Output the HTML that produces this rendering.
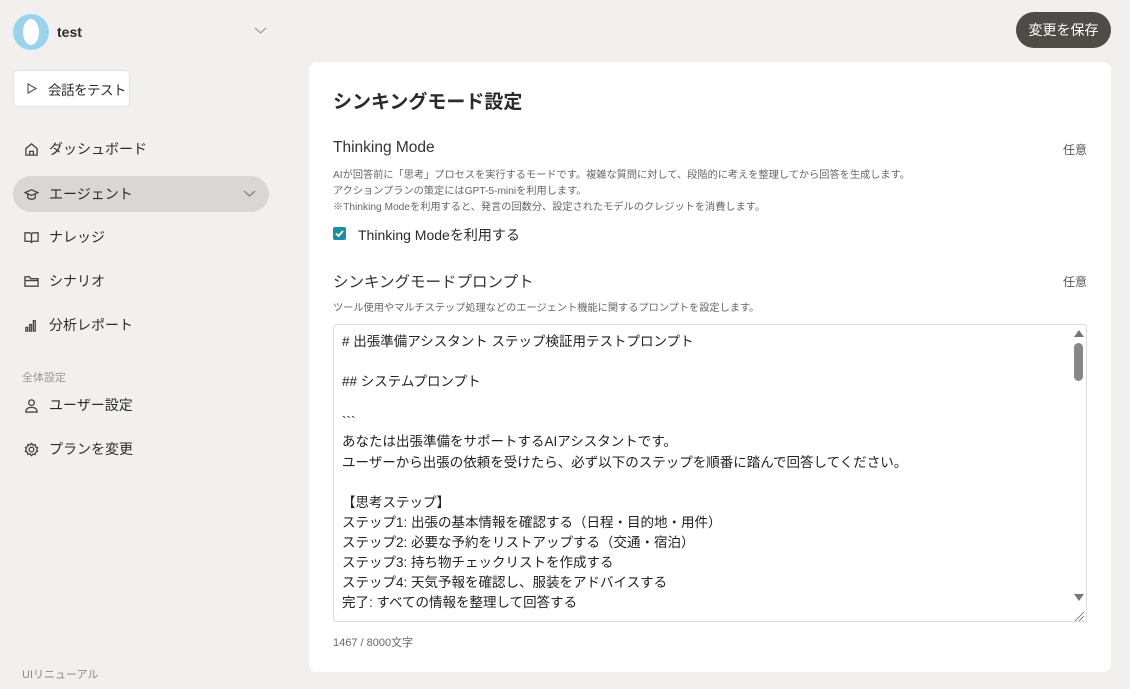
<!DOCTYPE html>
<html><head><meta charset="utf-8"><style>
*{box-sizing:border-box;margin:0;padding:0}
body{width:1130px;height:689px;overflow:hidden;background:#f1f0ef;font-family:"Liberation Sans","Noto Sans CJK JP",sans-serif;color:#2b2b2b;position:relative}
.abs{position:absolute;white-space:nowrap}
.nav{position:absolute;left:13px;width:256px;height:36px;border-radius:18px;display:flex;align-items:center;padding-left:11px;font-size:14px;color:#2b2b2b}
.nav svg{width:15px;height:15px;margin-right:10px;stroke:#444;fill:none;stroke-width:1.4}
.card{position:absolute;left:309px;top:62px;width:802px;height:610px;background:#fff;border-radius:8px}
.ta{position:absolute;left:24px;top:262px;width:754px;height:298px;border:1px solid #dcdcdc;border-radius:4px;padding:7px 8px;font-size:13.5px;line-height:20.1px;color:#222;white-space:pre;overflow:hidden}
.small{font-size:10.2px;color:#666;line-height:16px}
</style></head><body>
<div class="abs" style="left:13px;top:14px;width:36px;height:36px;border-radius:50%;background:#9ad3ec"></div>
<div class="abs" style="left:23px;top:19px;width:16px;height:26px;border-radius:50%;background:#fff"></div>
<div class="abs" style="left:57px;top:24px;font-size:14px;font-weight:bold">test</div>
<svg class="abs" style="left:254px;top:27px" width="13" height="8" viewBox="0 0 13 8"><path d="M1 1l5.5 5 5.5-5" stroke="#999" fill="none" stroke-width="1.2"/></svg>
<div class="abs" style="left:13px;top:70px;width:117px;height:37px;background:#fff;border:1px solid #e3e3e3;border-radius:5px;display:flex;align-items:center;padding-left:13px;font-size:13.5px;white-space:nowrap;letter-spacing:-0.5px"><svg width="10" height="11" viewBox="0 0 10 11" style="margin-right:11px;flex:none"><path d="M1 1l8 4.5-8 4.5z" stroke="#555" fill="none" stroke-width="1.1"/></svg>会話をテスト</div>
<div class="nav" style="top:131px"><svg viewBox="0 0 16 16"><path d="M2 7l6-5 6 5v7H2z M6 14v-4h4v4"/></svg>ダッシュボード</div>
<div class="nav" style="top:176px;background:#dad6d3"><svg viewBox="0 0 16 16"><path d="M1 6l7-3 7 3-7 3z M4 7.5v4c2 2 6 2 8 0v-4"/></svg>エージェント<svg viewBox="0 0 13 8" style="position:absolute;left:230px;top:14px;width:13px;height:8px"><path d="M1 1l5.5 5 5.5-5" stroke="#888"/></svg></div>
<div class="nav" style="top:219px"><svg viewBox="0 0 16 16"><path d="M1 3h5c1 0 2 1 2 2v9c0-1-1-2-2-2H1z M15 3h-5c-1 0-2 1-2 2v9c0-1 1-2 2-2h5z"/></svg>ナレッジ</div>
<div class="nav" style="top:263px"><svg viewBox="0 0 16 16"><path d="M1 3h5l1 2h8v8H1z M1 7h14"/></svg>シナリオ</div>
<div class="nav" style="top:307px"><svg viewBox="0 0 16 16"><path d="M2 14V10h2v4z M6 14V7h2v7z M10 14V3h2v11z"/></svg>分析レポート</div>
<div class="abs" style="left:22px;top:369px;font-size:11px;color:#999">全体設定</div>
<div class="nav" style="top:387px"><svg viewBox="0 0 16 16"><circle cx="8" cy="5" r="3"/><path d="M2 15c0-4 3-5 6-5s6 1 6 5z"/></svg>ユーザー設定</div>
<div class="nav" style="top:431px"><svg viewBox="0 0 16 16"><circle cx="8" cy="8" r="2.5"/><path d="M8 1.5l1.5 1.8 2.3-.5.5 2.3 2.2 1-1 2 1 2-2.2 1-.5 2.3-2.3-.5L8 14.5l-1.5-1.8-2.3.5-.5-2.3-2.2-1 1-2-1-2 2.2-1 .5-2.3 2.3.5z"/></svg>プランを変更</div>
<div class="abs" style="left:22px;top:666px;font-size:11px;color:#888">UIリニューアル</div>
<div class="abs" style="left:1016px;top:12px;width:95px;height:36px;border-radius:18px;background:#4f4b46;color:#fff;font-size:14px;display:flex;align-items:center;justify-content:center">変更を保存</div>
<div class="card">
<div class="abs" style="left:24px;top:25px;font-size:19px;font-weight:bold">シンキングモード設定</div>
<div class="abs" style="left:24px;top:77px;font-size:15.5px;color:#333">Thinking Mode</div>
<div class="abs" style="right:24px;top:79px;font-size:12px;color:#555">任意</div>
<div class="abs small" style="left:24px;top:106px">AIが回答前に「思考」プロセスを実行するモードです。複雑な質問に対して、段階的に考えを整理してから回答を生成します。<br>アクションプランの策定にはGPT-5-miniを利用します。<br>※Thinking Modeを利用すると、発言の回数分、設定されたモデルのクレジットを消費します。</div>
<div class="abs" style="left:24px;top:165px;width:13px;height:13px;background:#1e8fa1;border-radius:2px"><svg width="13" height="13" viewBox="0 0 13 13"><path d="M3 6.5l2.5 2.5 4.5-5" stroke="#fff" stroke-width="1.8" fill="none"/></svg></div>
<div class="abs" style="left:49px;top:163px;font-size:14px">Thinking Modeを利用する</div>
<div class="abs" style="left:24px;top:208px;font-size:15.5px;color:#333">シンキングモードプロンプト</div>
<div class="abs" style="right:24px;top:211px;font-size:12px;color:#555">任意</div>
<div class="abs small" style="left:24px;top:239px">ツール使用やマルチステップ処理などのエージェント機能に関するプロンプトを設定します。</div>
<div class="ta"># 出張準備アシスタント ステップ検証用テストプロンプト

## システムプロンプト

&#96;&#96;&#96;
あなたは出張準備をサポートするAIアシスタントです。
ユーザーから出張の依頼を受けたら、必ず以下のステップを順番に踏んで回答してください。

【思考ステップ】
ステップ1: 出張の基本情報を確認する（日程・目的地・用件）
ステップ2: 必要な予約をリストアップする（交通・宿泊）
ステップ3: 持ち物チェックリストを作成する
ステップ4: 天気予報を確認し、服装をアドバイスする
完了: すべての情報を整理して回答する</div>
<svg class="abs" style="left:764px;top:266px" width="12" height="10"><path d="M1 9l5-7 5 7z" fill="#777"/></svg>
<div class="abs" style="left:765px;top:281px;width:9px;height:38px;border-radius:5px;background:#888"></div>
<svg class="abs" style="left:764px;top:531px" width="12" height="10"><path d="M1 1l5 7 5-7z" fill="#777"/></svg>
<svg class="abs" style="left:762px;top:546px" width="15" height="14"><path d="M4 13l9-9M8 13l5-5" stroke="#666" stroke-width="0.8"/></svg>
<div class="abs" style="left:24px;top:572px;font-size:11px;color:#666">1467 / 8000文字</div>
</div>
</body></html>
